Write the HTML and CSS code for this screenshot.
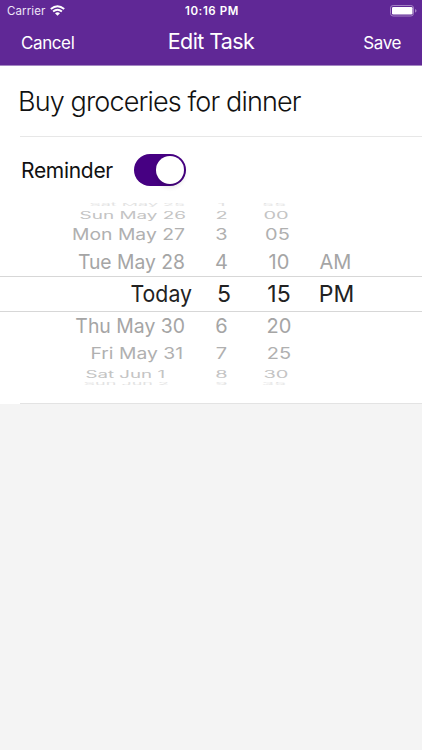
FILE: index.html
```html
<!DOCTYPE html>
<html lang="en">
<head>
<meta charset="utf-8">
<title>Edit Task</title>
<link rel="stylesheet" href="styles.css">
</head>
<body>
<header class="header">
  <div class="status">
    <div class="carrier"><span>Carrier</span>
      <svg class="wifi" width="15" height="11" viewBox="0 0 15 11"><path d="M.8 4Q7.5-1.6 14.2 4M3.1 6.5Q7.5 2.9 11.9 6.5" fill="none" stroke="#fff" stroke-width="1.9"/><path d="M5 8.2Q7.5 6.4 10 8.2L7.5 10.7Z" fill="#fff"/></svg>
    </div>
    <div class="clock">10:16 PM</div>
    <svg class="battery" width="27" height="12" viewBox="0 0 27 12"><rect x=".5" y=".5" width="23" height="10.5" rx="2.6" fill="none" stroke="#a382c3"/><rect x="2" y="2" width="20.5" height="7.6" rx="1.3" fill="#fff"/><path d="M25 4Q26.5 4.4 26.5 5.8T25 7.5Z" fill="#a382c3"/></svg>
  </div>
  <nav class="nav"><span class="cancel">Cancel</span><h1>Edit Task</h1><span class="save">Save</span></nav>
</header>
<main>
  <div class="task">Buy groceries for dinner</div>
  <div class="reminder"><span>Reminder</span><div class="switch"><div class="knob"></div></div></div>
  <div class="picker">
    <div class="row r1"><span>Sat May 25</span><span>1</span><span>55</span><span></span></div>
    <div class="row r2"><span>Sun May 26</span><span>2</span><span>00</span><span></span></div>
    <div class="row r3"><span>Mon May 27</span><span>3</span><span>05</span><span></span></div>
    <div class="row r4"><span>Tue May 28</span><span>4</span><span>10</span><span>AM</span></div>
    <div class="row selected"><span>Today</span><span>5</span><span>15</span><span>PM</span></div>
    <div class="row r6"><span>Thu May 30</span><span>6</span><span>20</span><span></span></div>
    <div class="row r7"><span>Fri May 31</span><span>7</span><span>25</span><span></span></div>
    <div class="row r8"><span>Sat Jun 1</span><span>8</span><span>30</span><span></span></div>
    <div class="row r9"><span>Sun Jun 2</span><span>9</span><span>35</span><span></span></div>
  </div>
  <div class="divider"></div>
</main>
</body>
</html>
```
FILE: styles.css
```css
* { box-sizing: border-box; }
body { margin: 0; height: 750px; overflow: hidden; background: #f4f4f4; font-family: Inter, "Liberation Sans", sans-serif; color: #111; }
.header { height: 66px; background: #602896; border-bottom: 1px solid #a487c2; color: #fff; }
.status { height: 22px; display: grid; grid-template-columns: 1fr 60px 1fr; align-items: center; padding: 0 5px 0 7px; }
.carrier { display: flex; align-items: center; gap: 5px; font-size: 11.5px; letter-spacing: .1px; color: #eee4f6; }
.wifi { margin-top: -1px; }
.clock { font-size: 11.5px; font-weight: 600; letter-spacing: .6px; text-align: center; white-space: nowrap; }
.battery { justify-self: end; }
.nav { height: 42px; display: grid; grid-template-columns: 1fr 100px 1fr; align-items: center; padding: 0 21px; font-size: 17px; letter-spacing: -.4px; }
.nav h1 { margin: -4px 0 0; font-size: 21.5px; line-height: 26px; font-weight: 400; letter-spacing: -.6px; text-align: center; white-space: nowrap; }
.save { text-align: right; }
main { height: 338px; background: #fff; display: flex; flex-direction: column; }
.task { height: 71px; margin-left: 20px; padding-top: 19px; border-bottom: 1px solid #e7e7e7; font-size: 27px; line-height: 34px; font-weight: 300; letter-spacing: -.87px; white-space: nowrap; text-indent: -2px; }
.reminder { height: 65px; padding: 17px 0 0 21px; display: flex; align-items: flex-start; font-size: 21px; line-height: 34px; letter-spacing: -.3px; }
.reminder span { width: 113px; }
.switch { width: 52px; height: 32px; border-radius: 16px; background: #460082; padding: 2px; display: flex; justify-content: flex-end; }
.knob { width: 28px; height: 28px; border-radius: 50%; background: #fff; box-shadow: 0 3px 5px #0002; }
.picker { flex: 1; }
.divider { height: 1px; margin-left: 20px; background: #e3e3e3; }
.row { display: grid; grid-template-columns: 185px 73px 42px 71px; height: var(--h); align-content: center; font-size: 20px; line-height: 24px; color: var(--c); white-space: nowrap; }
.row span { text-align: center; transform: translateX(var(--m, 0)) scaleY(var(--sy, 1)); }
.row span:first-child { text-align: right; transform-origin: right; transform: translateX(var(--d, 0)) scale(var(--sx, 1), var(--sy, 1)); }
.r1 { --h: 5px; --c: #e3e3e3; --sy: .2; --sx: .9; --m: -5px; }
.r2 { --h: 16px; --c: #c4c4c4; --sy: .5; --sx: .945; --d: 1px; }
.r3 { --h: 24px; --c: #b0b0b0; --sy: .78; --sx: .967; }
.r4 { --h: 29px; --c: #a5a5a5; --sx: .965; }
.row.selected { --h: 36px; --c: #222; --d: 7px; --m: 0px; --sx: .925; font-size: 23px; line-height: 30px; border-top: 1px solid #d7d7d7; border-bottom: 1px solid #d7d7d7; }
.row.selected span:nth-child(2) { --m: 2.5px; }
.row.selected span:nth-child(4) { --m: 1px; }
.r6 { --h: 28px; --c: #a5a5a5; --sx: .97; }
.r7 { --h: 26px; --c: #b0b0b0; --sy: .8; --sx: .965; --d: -2px; }
.r8 { --h: 15px; --c: #c4c4c4; --sy: .5; --sx: .935; --d: -20px; }
.r9 { --h: 6px; --c: #e3e3e3; --sy: .2; --sx: .9; --d: -16px; --m: -5px; }
.r2 span:nth-child(3), .r8 span:nth-child(3) { --m: -3px; }
.r3 span:nth-child(3) { --m: -1.5px; }
.r1 span:nth-child(2), .r9 span:nth-child(2) { --m: 0px; }
```
